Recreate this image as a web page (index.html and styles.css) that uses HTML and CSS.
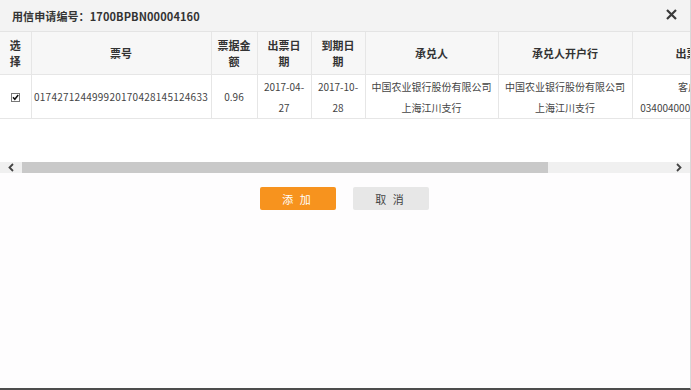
FILE: index.html
```html
<!DOCTYPE html>
<html lang="zh-CN">
<head>
  <meta charset="UTF-8">
  <meta name="viewport" content="width=device-width, initial-scale=1.0">
  <title>用信申请</title>
  <link rel="stylesheet" href="styles.css">
</head>
<body>
  <div class="dialog">
    <!-- Title bar -->
    <div class="dialog-head">
      <span class="dialog-title">用信申请编号：1700BPBN00004160</span>
      <span class="close">
        <svg width="11" height="11" viewBox="0 0 11 11"><path d="M1 1L10 10M10 1L1 10" stroke="#3a3a3a" stroke-width="2.2" fill="none"/></svg>
      </span>
    </div>

    <!-- Bill grid -->
    <div class="grid-view">
      <table class="grid">
        <colgroup>
          <col class="c-check">
          <col class="c-no">
          <col class="c-amt">
          <col class="c-date">
          <col class="c-date">
          <col class="c-bank">
          <col class="c-bank2">
          <col class="c-drawer">
        </colgroup>
        <thead>
          <tr>
            <th>选<br>择</th>
            <th>票号</th>
            <th>票据金<br>额</th>
            <th>出票日<br>期</th>
            <th>到期日<br>期</th>
            <th>承兑人</th>
            <th>承兑人开户行</th>
            <th>出票人</th>
          </tr>
        </thead>
        <tbody>
          <tr>
            <td>
              <span class="check">
                <svg width="9" height="9" viewBox="0 0 9 9"><rect x="0.5" y="0.5" width="8" height="8" fill="#fff" stroke="#777"/><path d="M2 4.3L3.8 6.3L7.2 2" stroke="#111" stroke-width="1.5" fill="none"/></svg>
              </span>
            </td>
            <td class="num">017427124499920170428145124633</td>
            <td>0.96</td>
            <td>2017-04-<br>27</td>
            <td>2017-10-<br>28</td>
            <td>中国农业银行股份有限公司<br>上海江川支行</td>
            <td>中国农业银行股份有限公司<br>上海江川支行</td>
            <td class="drawer">客户名<br>0340040000123456789</td>
          </tr>
        </tbody>
      </table>
    </div>

    <!-- Horizontal scroll bar -->
    <div class="hscroll">
      <span class="arrow">
        <svg width="6" height="9" viewBox="0 0 6 9"><path d="M5 1L1.5 4.5L5 8" stroke="#444" stroke-width="1.8" fill="none"/></svg>
      </span>
      <div class="track"><div class="thumb"></div></div>
      <span class="arrow">
        <svg width="6" height="9" viewBox="0 0 6 9"><path d="M1 1L4.5 4.5L1 8" stroke="#444" stroke-width="1.8" fill="none"/></svg>
      </span>
    </div>

    <!-- Actions -->
    <div class="actions">
      <button class="btn btn-primary">添 加</button>
      <button class="btn">取 消</button>
    </div>
  </div>
</body>
</html>
```

FILE: styles.css
```css
body {
  margin: 0;
  padding: 0;
  font-family: "Noto Sans CJK SC", "Liberation Sans", sans-serif;
  color: #333;
  background-color: #fff;
}
.dialog {
  box-sizing: border-box;
  width: 691px;
  height: 390px;
  background-color: #fefdfe;
  border-right: 1px solid #d8d8d8;
  border-bottom: 2px solid #4d4d4d;
  overflow: hidden;
}
.dialog-head {
  height: 31px;
  display: flex;
  justify-content: space-between;
  align-items: center;
  padding: 0 13px 0 12px;
  background-color: #f3f3f3;
  border-bottom: 1px solid #e4e4e4;
}
.dialog-title {
  font-size: 11px;
  font-weight: bold;
  color: #333;
  letter-spacing: 0.1px;
}
.close {
  display: flex;
  margin-top: -2px;
}
.grid-view {
  height: 130px;
  overflow: hidden;
  background-color: #fff;
}
.grid {
  table-layout: fixed;
  width: 752px;
  border-collapse: collapse;
}
.c-check { width: 31px; }
.c-no { width: 180px; }
.c-amt { width: 46px; }
.c-date { width: 54px; }
.c-bank { width: 133px; }
.c-bank2 { width: 134px; }
.c-drawer { width: 120px; }
.grid th,
.grid td {
  border: 1px solid #e6e6e6;
  text-align: center;
  padding: 0 2px;
  overflow: hidden;
  white-space: nowrap;
}
.grid tr > :first-child {
  border-left: none;
}
.grid th {
  height: 42px;
  background-color: #f7f7f7;
  font-size: 11px;
  font-weight: bold;
  line-height: 16px;
  color: #333;
  border-top: none;
}
.grid td {
  height: 43px;
  font-size: 10px;
  line-height: 21px;
  color: #444;
}
.grid td.num {
  letter-spacing: 0.25px;
}
.grid td.drawer {
  padding-left: 4px;
}
.check {
  display: inline-flex;
  vertical-align: middle;
  margin-top: -2px;
}
.hscroll {
  height: 11px;
  display: flex;
  align-items: stretch;
  background-color: #f0f0f0;
}
.arrow {
  width: 22px;
  display: flex;
  align-items: center;
  justify-content: center;
}
.track {
  flex: 1;
}
.thumb {
  width: 526px;
  height: 100%;
  background-color: #c9c9c9;
}
.actions {
  display: flex;
  justify-content: center;
  gap: 17px;
  margin-top: 14px;
  padding-right: 2px;
}
.btn {
  width: 76px;
  height: 23px;
  border: none;
  border-radius: 2px;
  background-color: #e7e7e7;
  color: #444;
  font-family: "Noto Sans CJK SC", sans-serif;
  font-size: 11px;
  letter-spacing: 2px;
  padding: 0;
  cursor: pointer;
}
.btn-primary {
  background-color: #f7931e;
  color: #fff;
}
```
